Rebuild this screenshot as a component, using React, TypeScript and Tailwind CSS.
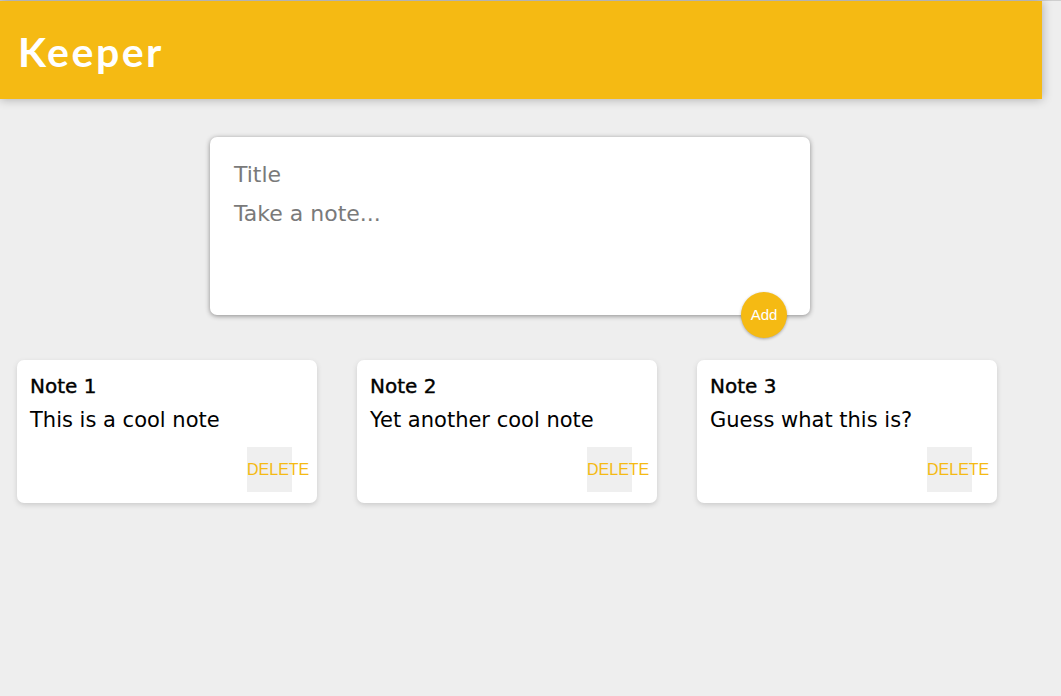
import React from "react";

const NOTES = [
  { title: "Note 1", content: "This is a cool note" },
  { title: "Note 2", content: "Yet another cool note" },
  { title: "Note 3", content: "Guess what this is?" },
];

function Header() {
  return (
    <header className="w-[1042px] h-[98px] bg-[#f5ba13] flex items-center px-[18px] shadow-[0_0_10px_0_rgba(0,0,0,0.3)] relative z-10">
      <h1 className="text-white text-[41px] font-bold tracking-[2.5px] font-['Lato',sans-serif] leading-none pt-[3px]">
        Keeper
      </h1>
    </header>
  );
}

function CreateArea() {
  return (
    <form className="relative ml-[210px] mt-[38px] w-[600px] h-[178px] bg-white rounded-[7px] shadow-[0_1px_5px_rgb(138,137,137)] px-6 pt-[19px]">
      <div className="text-[22px] leading-[38px] text-[#7a7a7a] font-['DejaVu_Sans',sans-serif] font-normal">
        Title
      </div>
      <div className="text-[22px] leading-[40px] text-[#7a7a7a] font-['DejaVu_Sans',sans-serif] font-normal">
        Take a note...
      </div>
      <button
        type="button"
        className="absolute left-[531px] top-[155px] w-[46px] h-[46px] rounded-full bg-[#f5ba13] text-white text-[15px] font-['Liberation_Sans',sans-serif] shadow-[0_1px_3px_rgba(0,0,0,0.3)] flex items-center justify-center"
      >
        Add
      </button>
    </form>
  );
}

function Note({ title, content }: { title: string; content: string }) {
  return (
    <div className="w-[300px] h-[143px] bg-white rounded-[7px] shadow-[0_2px_5px_#ccc] px-[13px] pt-[12px] flex flex-col">
      <h2 className="text-[20px] leading-[28px] font-normal text-black font-['DejaVu_Sans',sans-serif] [-webkit-text-stroke:0.4px_black]">
        {title}
      </h2>
      <p className="text-[21px] leading-[40px] font-normal text-black font-['DejaVu_Sans',sans-serif]">
        {content}
      </p>
      <div className="flex justify-end pr-[12px] mt-[7px]">
        <button
          type="button"
          className="w-[45px] h-[45px] bg-[#efefef] text-[#f5ba13] text-[16px] font-['Liberation_Sans',sans-serif] flex items-center whitespace-nowrap overflow-visible"
        >
          DELETE
        </button>
      </div>
    </div>
  );
}

export default function App() {
  return (
    <div className="min-h-[696px] bg-[#eeeeee] w-[1061px] border-t border-[#cfcfcf]">
      <Header />
      <CreateArea />
      <div className="flex gap-[40px] pl-[17px] mt-[45px]">
        {NOTES.map((n) => (
          <Note key={n.title} title={n.title} content={n.content} />
        ))}
      </div>
    </div>
  );
}
